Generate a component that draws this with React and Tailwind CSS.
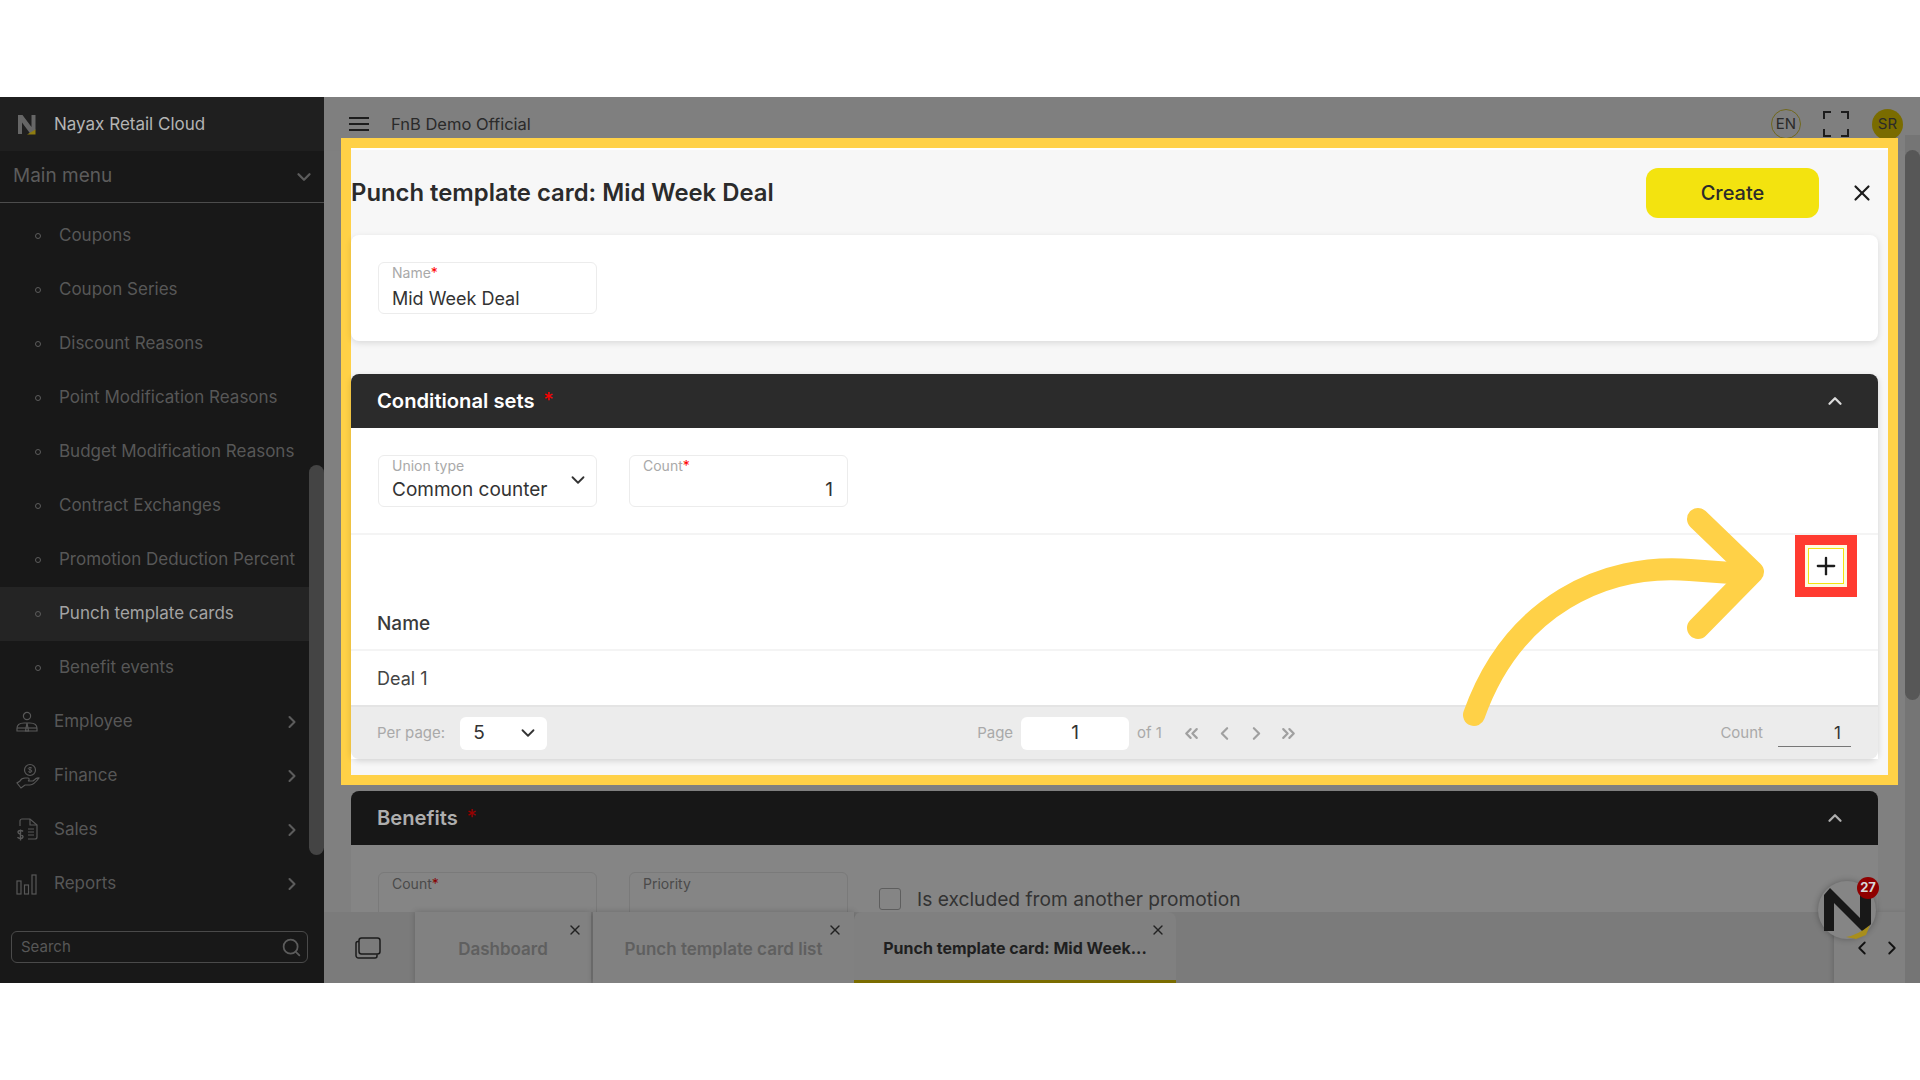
import { ChevronDown, ChevronRight, ChevronLeft, ChevronUp, ChevronsLeft, ChevronsRight, X, Search, Plus } from "lucide-react";

const subItems = [
  "Coupons",
  "Coupon Series",
  "Discount Reasons",
  "Point Modification Reasons",
  "Budget Modification Reasons",
  "Contract Exchanges",
  "Promotion Deduction Percent",
  "Punch template cards",
  "Benefit events",
];

function EmployeeIcon() {
  return (
    <svg width="22" height="22" viewBox="0 0 22 22" fill="none" stroke="#585858" strokeWidth="1.2">
      <circle cx="11" cy="5" r="3.6" />
      <path d="M1 20v-2.5C1 14 4 12 8 12h6c4 0 7 2 7 5.5V20Z" />
      <path d="M11 12l-1.5 8h3Z" />
      <path d="M1 17h20" />
    </svg>
  );
}

function FinanceIcon() {
  return (
    <svg width="24" height="26" viewBox="0 0 24 26" fill="none" stroke="#585858" strokeWidth="1.2">
      <circle cx="14" cy="7" r="5.5" />
      <path d="M14 4v6M12.3 8.6c.8 1 3.6 1 3.6-.6s-3.6-1-3.6-2.4c0-1.4 2.8-1.4 3.6-.5" strokeWidth="1" />
      <path d="M1 20l4 5 4-3h5c3 0 6-3 9-7-2-1-4 1-6 3h-5c1.500-.5 1.500-3 0-3H9c-2 0-4 1-5 3Z" />
    </svg>
  );
}

function SalesIcon() {
  return (
    <svg width="22" height="26" viewBox="0 0 22 26" fill="none" stroke="#585858" strokeWidth="1.2">
      <path d="M4 9V4a2 2 0 0 1 2-2h8l7 6v12a2 2 0 0 1-2 2h-7" />
      <path d="M14 2v6h7M12 12h6M12 15h6M12 18h6" />
      <path d="M7 14.500c-1-1.500-5-1.500-5 .8s5 1.700 5 4.200-4 2.500-5.500.8M4.500 12.500v11" strokeWidth="1.400" />
    </svg>
  );
}

function ReportsIcon() {
  return (
    <svg width="21" height="21" viewBox="0 0 21 21" fill="none" stroke="#585858" strokeWidth="1.2">
      <rect x="1" y="7" width="4" height="13" />
      <rect x="8.500" y="11" width="4" height="9" />
      <rect x="16" y="1" width="4" height="19" />
    </svg>
  );
}

function Logo() {
  return (
    <svg width="20" height="22" viewBox="0 0 20 22">
      <path d="M1 1h4.500l9 12V1H18.500v15L13.500 20 5 8.500V20H1Z" fill="#666666" />
      <path d="M10 20.500l8.500-5v5Z" fill="#8f7d10" />
    </svg>
  );
}

function Field({ label, required, children, className = "" }) {
  return (
    <div className={`relative h-[52px] w-[219px] rounded-md border border-[#ececec] bg-white px-[13px] ${className}`}>
      <div className="pt-[1px] text-[14px] leading-[18px] text-[#a9a9a9]">
        {label}
        {required && <span className="text-[#f00]">*</span>}
      </div>
      {children}
    </div>
  );
}

export default function App() {
  return (
    <div className="h-[1080px] w-[1920px] overflow-hidden bg-white font-['Inter',sans-serif]">
      <div className="h-[97px]" />
      <div className="relative flex h-[886px] overflow-hidden bg-[#808080]">
        {/* sidebar */}
        <aside className="relative flex w-[324px] shrink-0 flex-col bg-[#181818]">
          <div className="flex h-[54px] items-center gap-[17px] bg-[#1f1f1f] pl-[17px] pt-[1px] text-[17px] text-[#b4b4b4]">
            <Logo />
            <span>Nayax Retail Cloud</span>
          </div>
          <div className="flex h-[52px] items-center justify-between border-b border-[#4c4c4c] pl-[13px] pr-[9px] text-[19px] text-[#5c5c5c]">
            <span>Main menu</span>
            <ChevronDown size={22} strokeWidth={2.5} className="text-[#5c5c5c]" />
          </div>
          <div className="w-[309px] pt-[6px]">
            {subItems.map((item) => (
              <div
                key={item}
                className={`flex h-[54px] items-center gap-[18px] pl-[35px] text-[17px] ${
                  item === "Punch template cards" ? "bg-[#242424] text-[#a3a3a3]" : "text-[#575757]"
                }`}
              >
                <span className="h-[6px] w-[6px] rounded-full border border-[#5c5c5c]" />
                <span>{item}</span>
              </div>
            ))}
            {[
              ["Employee", <EmployeeIcon />],
              ["Finance", <FinanceIcon />],
              ["Sales", <SalesIcon />],
              ["Reports", <ReportsIcon />],
            ].map(([name, icon]) => (
              <div key={name} className="flex h-[54px] items-center pl-[16px] pr-[7px] text-[17px] text-[#575757]">
                <span className="flex w-[38px] items-center">{icon}</span>
                <span className="flex-1">{name}</span>
                <ChevronRight size={20} strokeWidth={2.5} className="text-[#5c5c5c]" />
              </div>
            ))}
          </div>
          <div className="ml-[11px] mt-[20px] flex h-[32px] w-[297px] items-center justify-between rounded-md border border-[#4a4a4a] pl-[9px] pr-[5px] text-[15px] text-[#575757]">
            <span>Search</span>
            <Search size={21} className="text-[#5c5c5c]" />
          </div>
          <div className="absolute right-0 top-[368px] h-[390px] w-[15px] rounded-b-lg rounded-t-lg bg-[#444444]" />
        </aside>

        {/* main */}
        <main className="relative min-w-0 flex-1">
          <div className="flex h-[54px] items-center bg-[#7f7f7f] pl-[25px] pr-[17px] text-[16.5px] text-[#2a2a2a]">
            <span className="flex w-[20px] flex-col gap-[4px]">
              <span className="h-[2px] bg-[#1c1c1c]" />
              <span className="h-[2px] bg-[#1c1c1c]" />
              <span className="h-[2px] bg-[#1c1c1c]" />
            </span>
            <span className="ml-[22px] flex-1">FnB Demo Official</span>
            <span className="flex h-[30px] w-[30px] items-center justify-center rounded-full border border-[#71681c] text-[15px]">EN</span>
            <svg className="ml-[22px]" width="26" height="26" viewBox="0 0 26 26" fill="none" stroke="#1c1c1c" strokeWidth="2">
              <path d="M1 8V1h7M18 1h7v7M25 18v7h-7M8 25H1v-7" />
            </svg>
            <span className="ml-[23px] flex h-[31px] w-[31px] items-center justify-center rounded-full bg-[#7a6c00] text-[15px]">SR</span>
          </div>

          {/* highlighted form section */}
          <section className="relative z-10 -mt-[13px] ml-[17px] h-[647px] w-[1557px] border-[10px] border-[#ffd147] bg-[#f7f7f7] pr-[10px]">
            <div className="-mr-[10px] h-[2px] bg-white" />
            <div className="flex h-[85px] items-center pt-[1px]">
              <h1 className="flex-1 text-[23.85px] font-semibold text-[#2b2b2b]">Punch template card: Mid Week Deal</h1>
              <button className="h-[50px] w-[173px] rounded-xl bg-[#f3e30f] text-[20px] font-medium text-[#2b2b2b]">Create</button>
              <X size={26} className="ml-[30px] mr-[3px] text-[#1c1c1c]" strokeWidth={2} />
            </div>
            <div className="h-[106px] rounded-lg bg-white pl-[27px] pt-[27px] shadow-[0_2px_6px_rgba(0,0,0,0.12)]">
              <Field label="Name" required>
                <div className="mt-[6px] text-[18px] leading-[22px] text-[#333]">Mid Week Deal</div>
              </Field>
            </div>
            <div className="mt-[33px] rounded-lg shadow-[0_2px_6px_rgba(0,0,0,0.15)]">
              <div className="flex h-[54px] items-center rounded-t-lg bg-[#2b2b2b] pl-[26px] pr-[32px] text-white">
                <span className="text-[20.2px] font-semibold">Conditional sets</span>
                <span className="mb-[2px] ml-[9px] text-[20px] text-[#f00]">*</span>
                <ChevronUp size={22} strokeWidth={2.5} className="ml-auto text-[#dcdcdc]" />
              </div>
              <div className="bg-white">
                <div className="flex h-[107px] gap-[32px] border-b-2 border-[#f4f4f4] pl-[27px] pt-[27px]">
                  <Field label="Union type">
                    <div className="mt-[4px] text-[19px] leading-[22px] text-[#333]">Common counter</div>
                    <ChevronDown size={22} className="absolute right-[7px] top-[13px] text-[#333]" />
                  </Field>
                  <Field label="Count" required>
                    <div className="mt-[4px] pr-[1px] text-right text-[19px] leading-[22px] text-[#333]">1</div>
                  </Field>
                </div>
                <div className="flex h-[61px] items-center justify-end pr-[21px] pt-[1px]">
                  <div className="border-[10px] border-[#ff3b30]">
                    <div className="flex h-[42px] w-[42px] items-center justify-center bg-[#fffbe0] p-[3px]">
                      <div className="flex h-full w-full items-center justify-center border border-[#f3e30f] bg-white">
                        <Plus size={28} strokeWidth={2} className="text-[#1c1c1c]" />
                      </div>
                    </div>
                  </div>
                </div>
                <div className="flex h-[55px] items-center border-b-2 border-[#f4f4f4] pl-[26px] pt-[4px] text-[19px] font-medium text-[#3a3a3a]">Name</div>
                <div className="flex h-[54px] items-center pl-[26px] text-[18px] text-[#444]">Deal 1</div>
                <div className="relative flex h-[54px] items-center rounded-b-lg border-t-2 border-[#e4e4e4] bg-[#ececec] pl-[26px] pr-[27px] text-[15px] text-[#a9a9a9]">
                  <span>Per page:</span>
                  <div className="ml-[15px] flex h-[33px] w-[87px] items-center justify-between rounded-md bg-white pl-[13px] pr-[8px] text-[19px] text-[#333]">
                    5
                    <ChevronDown size={22} className="text-[#333]" />
                  </div>
                  <span className="ml-[430px]">Page</span>
                  <div className="ml-[8px] flex h-[33px] w-[108px] items-center justify-center rounded-md bg-white text-[19px] text-[#333]">1</div>
                  <span className="ml-[8px]">of 1</span>
                  <ChevronsLeft size={21} strokeWidth={2.5} className="ml-[19px] text-[#a0a0a0]" />
                  <ChevronLeft size={21} strokeWidth={2.5} className="ml-[12px] text-[#a0a0a0]" />
                  <ChevronRight size={21} strokeWidth={2.5} className="ml-[11px] text-[#a0a0a0]" />
                  <ChevronsRight size={21} strokeWidth={2.5} className="ml-[11px] text-[#a0a0a0]" />
                  <span className="ml-auto">Count</span>
                  <div className="ml-[15px] w-[73px] border-b border-[#777] pr-[10px] text-right text-[17px] leading-[26px] text-[#333]">1</div>
                </div>
              </div>
            </div>

            {/* curved arrow pointing at the plus button */}
            <svg className="absolute left-[1104px] top-[357px]" width="320" height="235" viewBox="0 0 320 235" fill="none" stroke="#ffd147" strokeWidth="22" strokeLinecap="round" strokeLinejoin="round">
              <path d="M19 210C58 100 150 58 235 65L290 69" />
              <path d="M243 14L298 67L243 123" />
            </svg>
          </section>

          {/* dimmed section under the highlight */}
          <section className="ml-[27px] mt-[6px] w-[1527px]">
            <div className="flex h-[54px] items-center rounded-t-lg bg-[#171717] pl-[26px] pr-[32px] text-[#aeaeae]">
              <span className="text-[20.2px] font-semibold">Benefits</span>
              <span className="mb-[2px] ml-[9px] text-[20px] text-[#900]">*</span>
              <ChevronUp size={22} strokeWidth={2.5} className="ml-auto text-[#aeaeae]" />
            </div>
            <div className="flex h-[100px] gap-[32px] bg-[#858585] pl-[27px] pt-[27px]">
              <div className="h-[52px] w-[219px] rounded-md border border-[#7a7a7a] px-[13px] pt-[2px] text-[14px] leading-[18px] text-[#4a4a4a]">
                Count<span className="text-[#800]">*</span>
              </div>
              <div className="h-[52px] w-[219px] rounded-md border border-[#7a7a7a] px-[13px] pt-[2px] text-[14px] leading-[18px] text-[#4a4a4a]">Priority</div>
            </div>
          </section>

          <div className="absolute left-[555px] top-[788px] flex items-center gap-[16px] text-[19.2px] text-[#333]">
            <span className="h-[22px] w-[22px] rounded-[3px] border border-[#5e5e5e]" />
            <span>Is excluded from another promotion</span>
          </div>

          {/* tab bar */}
          <div className="absolute bottom-0 left-0 right-0 flex h-[71px] bg-[#7b7b7b]">
            <div className="flex w-[87px] items-center justify-center">
              <svg width="26" height="22" viewBox="0 0 26 22" fill="none" stroke="#1c1c1c" strokeWidth="1.5">
                <rect x="4" y="1" width="21" height="16" rx="2.500" />
                <path d="M4 4.500H3A2 2 0 0 0 1 6.500V18.500A2.500 2.500 0 0 0 3.500 21H20a2 2 0 0 0 2-2v-1.500" />
              </svg>
            </div>
            <div className="relative ml-[4px] flex w-[176px] items-center justify-center bg-[#818181] pt-[4px] text-[17px] font-semibold text-[#5f5f5f] shadow-[0_0_6px_rgba(0,0,0,0.2)]">
              Dashboard
              <X size={16} className="absolute right-[8px] top-[10px] text-[#222]" />
            </div>
            <div className="relative ml-[2px] flex w-[261px] items-center justify-center bg-[#818181] pt-[4px] text-[17px] font-semibold text-[#5f5f5f] shadow-[0_0_6px_rgba(0,0,0,0.2)]">
              Punch template card list
              <X size={16} className="absolute right-[11px] top-[10px] text-[#222]" />
            </div>
            <div className="relative flex w-[322px] items-center justify-center rounded-t-lg border-b-[3px] border-[#7a6c00] bg-[#808080] pt-[3px] text-[16px] font-bold text-[#1f1f1f]">
              Punch template card: Mid Week...
              <X size={16} className="absolute right-[10px] top-[10px] text-[#222]" />
            </div>
            <div className="ml-auto flex w-[86px] items-center justify-center gap-[8px] bg-[#818181] text-[#111] shadow-[-2px_0_4px_rgba(0,0,0,0.12)]">
              <ChevronLeft size={22} />
              <ChevronRight size={22} />
            </div>
          </div>

          {/* page scrollbar */}
          <div className="absolute right-0 top-[38px] h-[848px] w-[15px] bg-[#757575]">
            <div className="mt-[15px] h-[550px] rounded-lg bg-[#575757]" />
          </div>

          {/* help bubble */}
          <div className="absolute left-[1494px] top-[784px] z-20 flex h-[58px] w-[58px] items-center justify-center rounded-full bg-[#858585] shadow-[0_0_6px_rgba(0,0,0,0.3)]">
            <svg width="58" height="58" viewBox="0 0 58 58">
              <path d="M6 50V14l6-7 30 30V9h11v34l-7 9L16 22v28Z" fill="#181818" />
              <path d="M28 56q12-2 24-12l-4 10-10 4Z" fill="#a88e1c" />
            </svg>
            <span className="absolute -right-[3px] -top-[4px] flex h-[22px] w-[22px] items-center justify-center rounded-full bg-[#8f0000] text-[13px] font-bold text-[#d8d8d8]">27</span>
          </div>
        </main>
      </div>
    </div>
  );
}
